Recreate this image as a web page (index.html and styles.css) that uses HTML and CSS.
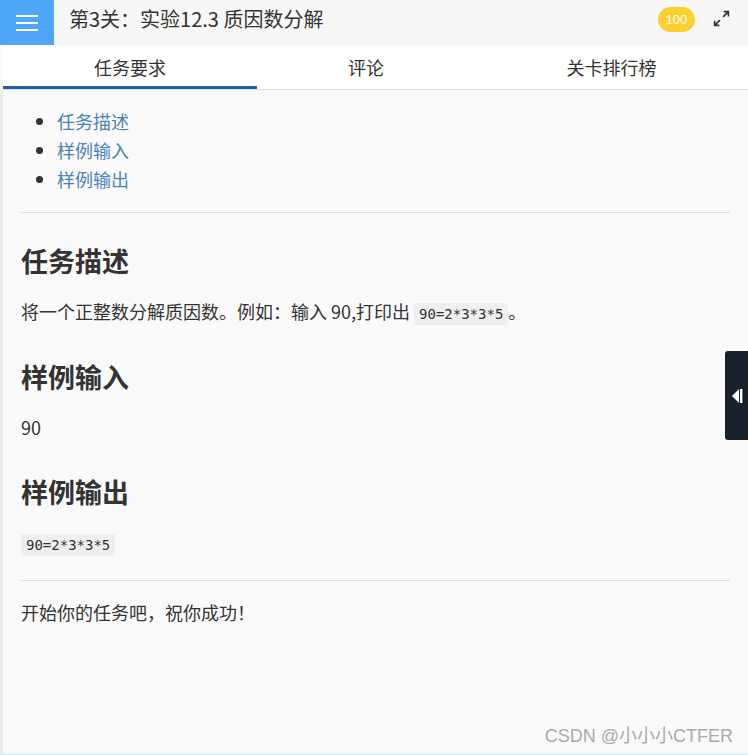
FILE: index.html
```html
<!DOCTYPE html>
<html lang="zh-CN">
<head>
    <meta charset="UTF-8">
    <meta name="viewport" content="width=device-width, initial-scale=1.0">
    <title>第3关：实验12.3 质因数分解</title>
    <link rel="stylesheet" href="styles.css">
</head>
<body>
    <div class="page">
        <div class="top-bar">
            <div class="menu-btn">
                <svg width="22" height="18" viewBox="0 0 22 18">
                    <rect x="0" y="1" width="22" height="2" fill="#fff"/>
                    <rect x="0" y="8" width="22" height="2" fill="#fff"/>
                    <rect x="0" y="15" width="22" height="2" fill="#fff"/>
                </svg>
            </div>
            <h1 class="title">第3关：实验12.3 质因数分解</h1>
            <span class="score">100</span>
            <span class="expand">
                <svg width="17" height="17" viewBox="0 0 16 16" fill="none" stroke="#333" stroke-width="1.5">
                    <path d="M9.5 6.5 L14.5 1.5 M10 1.5 H14.5 V6"/>
                    <path d="M6.5 9.5 L1.5 14.5 M1.5 10 V14.5 H6"/>
                </svg>
            </span>
        </div>

        <div class="tabs">
            <div class="tab tab-first active">任务要求</div>
            <div class="tab tab-second">评论</div>
            <div class="tab tab-third">关卡排行榜</div>
        </div>

        <div class="content">
            <ul class="toc">
                <li><a href="#desc">任务描述</a></li>
                <li><a href="#input">样例输入</a></li>
                <li><a href="#output">样例输出</a></li>
            </ul>
            <hr class="hr-top">
            <h2 id="desc">任务描述</h2>
            <p>将一个正整数分解质因数。例如：输入 90,打印出 <code>90=2*3*3*5</code>。</p>
            <h2 id="input">样例输入</h2>
            <p class="sample-input">90</p>
            <h2 id="output">样例输出</h2>
            <p><code>90=2*3*3*5</code></p>
            <hr class="hr-bottom">
            <p>开始你的任务吧，祝你成功！</p>
        </div>

        <div class="side-toggle">
            <svg width="12" height="16" viewBox="0 0 12 16">
                <polygon points="8,1 1,8 8,15" fill="#fff"/>
                <rect x="9" y="1" width="2.4" height="14" fill="#fff"/>
            </svg>
        </div>

        <div class="watermark">CSDN @小小小CTFER</div>
    </div>
</body>
</html>
```

FILE: styles.css
```css
* {
    margin: 0;
    padding: 0;
    box-sizing: border-box;
}

body {
    font-family: "Noto Sans CJK SC", "Noto Sans", sans-serif;
    background: #fafafa;
    color: #333;
}

.page {
    position: relative;
    width: 748px;
    height: 755px;
    overflow: hidden;
    background: #fafafa;
    border-bottom: 2px solid #e3eefa;
}

.top-bar {
    display: flex;
    align-items: flex-start;
    height: 45px;
    background: #f7f7f7;
}

.menu-btn {
    width: 54px;
    height: 45px;
    background: #4ea6f8;
    display: flex;
    align-items: center;
    justify-content: center;
}

.title {
    flex: 1;
    margin-left: 15px;
    font-size: 20px;
    font-weight: normal;
    line-height: 38px;
    color: #333;
}

.score {
    margin-top: 7px;
    width: 37px;
    height: 25px;
    border-radius: 13px;
    background: #fdd02f;
    color: #fff;
    font-family: "Liberation Sans", sans-serif;
    font-size: 13px;
    line-height: 25px;
    text-align: center;
}

.expand {
    width: 53px;
    height: 37px;
    display: flex;
    justify-content: center;
    align-items: center;
}

.tabs {
    display: flex;
    height: 45px;
    margin-left: 3px;
    background: #fff;
    border-bottom: 1px solid #e0e0e0;
}

.tab {
    font-size: 18px;
    line-height: 44px;
    text-align: center;
    color: #333;
}

.tab-first {
    width: 254px;
}

.tab-second {
    width: 218px;
}

.tab-third {
    flex: 1;
}

.tab.active {
    border-bottom: 3px solid #1f5faf;
}

.content {
    border-left: 3px solid #ececec;
    padding: 17px 18px 0 18px;
    height: 665px;
}

.toc {
    padding-left: 36px;
}

.toc li {
    font-size: 18px;
    line-height: 29px;
    color: #333;
}

.toc a {
    color: #4a82b8;
    text-decoration: none;
}

hr {
    border: none;
    border-top: 1px solid #dedede;
    width: 709px;
}

.hr-top {
    margin-top: 18px;
}

h2 {
    font-size: 27px;
    font-weight: bold;
    color: #333;
    line-height: 36px;
    margin-top: 31px;
    margin-bottom: 18px;
}

.hr-top + h2 {
    margin-top: 30px;
}

p {
    font-size: 18px;
    line-height: 28px;
    margin-bottom: 5px;
    color: #333;
}

.sample-input {
    margin-bottom: 33px;
}

code {
    font-family: "DejaVu Sans Mono", monospace;
    font-size: 14px;
    background: #efefef;
    padding: 3px 5px;
    border-radius: 2px;
}

.hr-bottom {
    margin-top: 21px;
    margin-bottom: 17px;
}

.side-toggle {
    position: absolute;
    right: 0;
    top: 351px;
    width: 23px;
    height: 89px;
    background: #18212a;
    border-radius: 3px 0 0 3px;
    display: flex;
    align-items: center;
    justify-content: center;
}

.watermark {
    position: absolute;
    right: 15px;
    bottom: 6px;
    font-family: "Liberation Sans", "Noto Sans CJK SC", sans-serif;
    font-size: 18px;
    color: #aaa;
}
```
